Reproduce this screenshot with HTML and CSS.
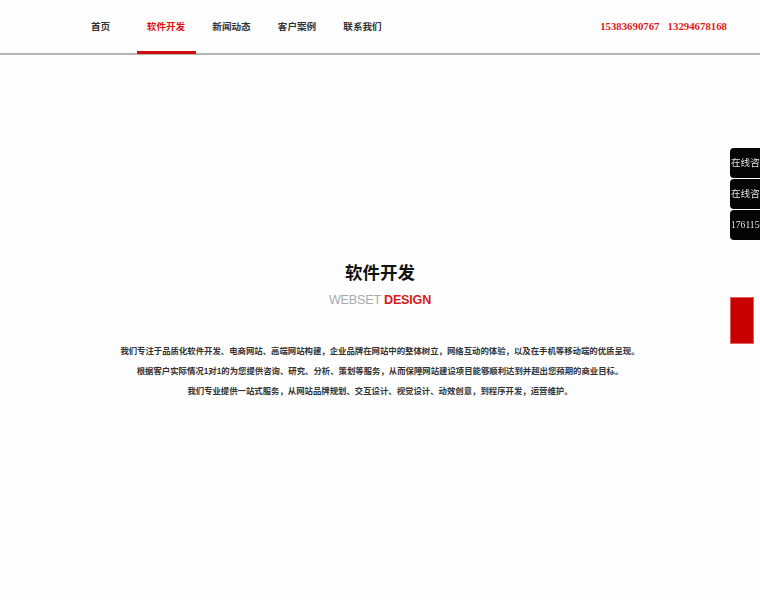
FILE: index.html
```html
<!DOCTYPE html>
<html lang="zh">
<head>
<meta charset="utf-8">
<title>软件开发</title>
<link rel="stylesheet" href="styles.css">
</head>
<body>
<header class="header">
  <nav class="nav">
    <a class="nav-item">首页</a>
    <a class="nav-item active">软件开发</a>
    <a class="nav-item">新闻动态</a>
    <a class="nav-item">客户案例</a>
    <a class="nav-item">联系我们</a>
  </nav>
  <div class="phones">15383690767&nbsp;&nbsp;&nbsp;13294678168</div>
</header>
<main class="main">
  <h1 class="title">软件开发</h1>
  <div class="subtitle"><span class="sub-gray">WEBSET</span> <span class="sub-red">DESIGN</span></div>
  <div class="desc">
    <p>我们专注于品质化软件开发、电商网站、高端网站构建，企业品牌在网站中的整体树立，网络互动的体验，以及在手机等移动端的优质呈现。</p>
    <p>根据客户实际情况1对1的为您提供咨询、研究、分析、策划等服务，从而保障网站建设项目能够顺利达到并超出您预期的商业目标。</p>
    <p>我们专业提供一站式服务，从网站品牌规划、交互设计、视觉设计、动效创意，到程序开发，运营维护。</p>
  </div>
</main>
<aside class="side">
  <div class="side-item">在线咨询</div>
  <div class="side-item">在线咨询</div>
  <div class="side-item">17611500000</div>
</aside>
<div class="side-red"></div>
</body>
</html>
```
FILE: styles.css
```css
html, body {
  margin: 0;
  padding: 0;
  background: #fefefe;
  font-family: "Liberation Sans", "Noto Sans CJK SC", sans-serif;
}
.header {
  height: 53px;
  border-bottom: 2px solid #b4b4b4;
  display: flex;
  align-items: center;
  justify-content: space-between;
  box-sizing: content-box;
}
.nav {
  display: flex;
  height: 100%;
  margin-left: 71px;
  gap: 6.5px;
}
.nav-item {
  width: 59px;
  display: flex;
  align-items: center;
  justify-content: center;
  font-size: 9.6px;
  font-weight: bold;
  color: #333;
  position: relative;
  padding-bottom: 1px;
  box-sizing: border-box;
}
.nav-item.active {
  color: #e01010;
}
.nav-item.active::after {
  content: "";
  position: absolute;
  left: 0;
  right: 0;
  bottom: -1px;
  height: 3px;
  background: #d00d0d;
}
.phones {
  margin-right: 33px;
  font-family: "Liberation Serif", "Noto Sans CJK SC", serif;
  font-weight: bold;
  font-size: 10.8px;
  color: #e01a1a;
  padding-bottom: 1px;
}
.main {
  padding-top: 206px;
  text-align: center;
}
.title {
  margin: 0;
  font-size: 17.5px;
  font-weight: bold;
  color: #111;
  line-height: 24px;
}
.subtitle {
  margin-top: 7px;
  font-size: 12.6px;
  line-height: 16px;
  letter-spacing: -0.2px;
}
.sub-gray {
  color: #aaa;
}
.sub-red {
  color: #d81c1c;
  font-weight: bold;
}
.desc {
  margin-top: 33px;
}
.desc p {
  margin: 0;
  font-size: 8.4px;
  line-height: 20px;
  color: #333;
  font-weight: bold;
}
.side {
  position: fixed;
  left: 730px;
  top: 148px;
  display: flex;
  flex-direction: column;
  gap: 1.5px;
}
.side-item {
  width: 100px;
  height: 29.5px;
  background: #050505;
  border-radius: 4px;
  color: #e0e0e0;
  font-family: "Liberation Serif", "Noto Sans CJK SC", serif;
  font-size: 9.6px;
  line-height: 29px;
  padding-left: 1px;
  white-space: nowrap;
}
.side-red {
  position: fixed;
  left: 730px;
  top: 297px;
  width: 24px;
  height: 47px;
  background: #c80000;
  border: 0.5px solid #e06060;
  box-sizing: border-box;
}
```
